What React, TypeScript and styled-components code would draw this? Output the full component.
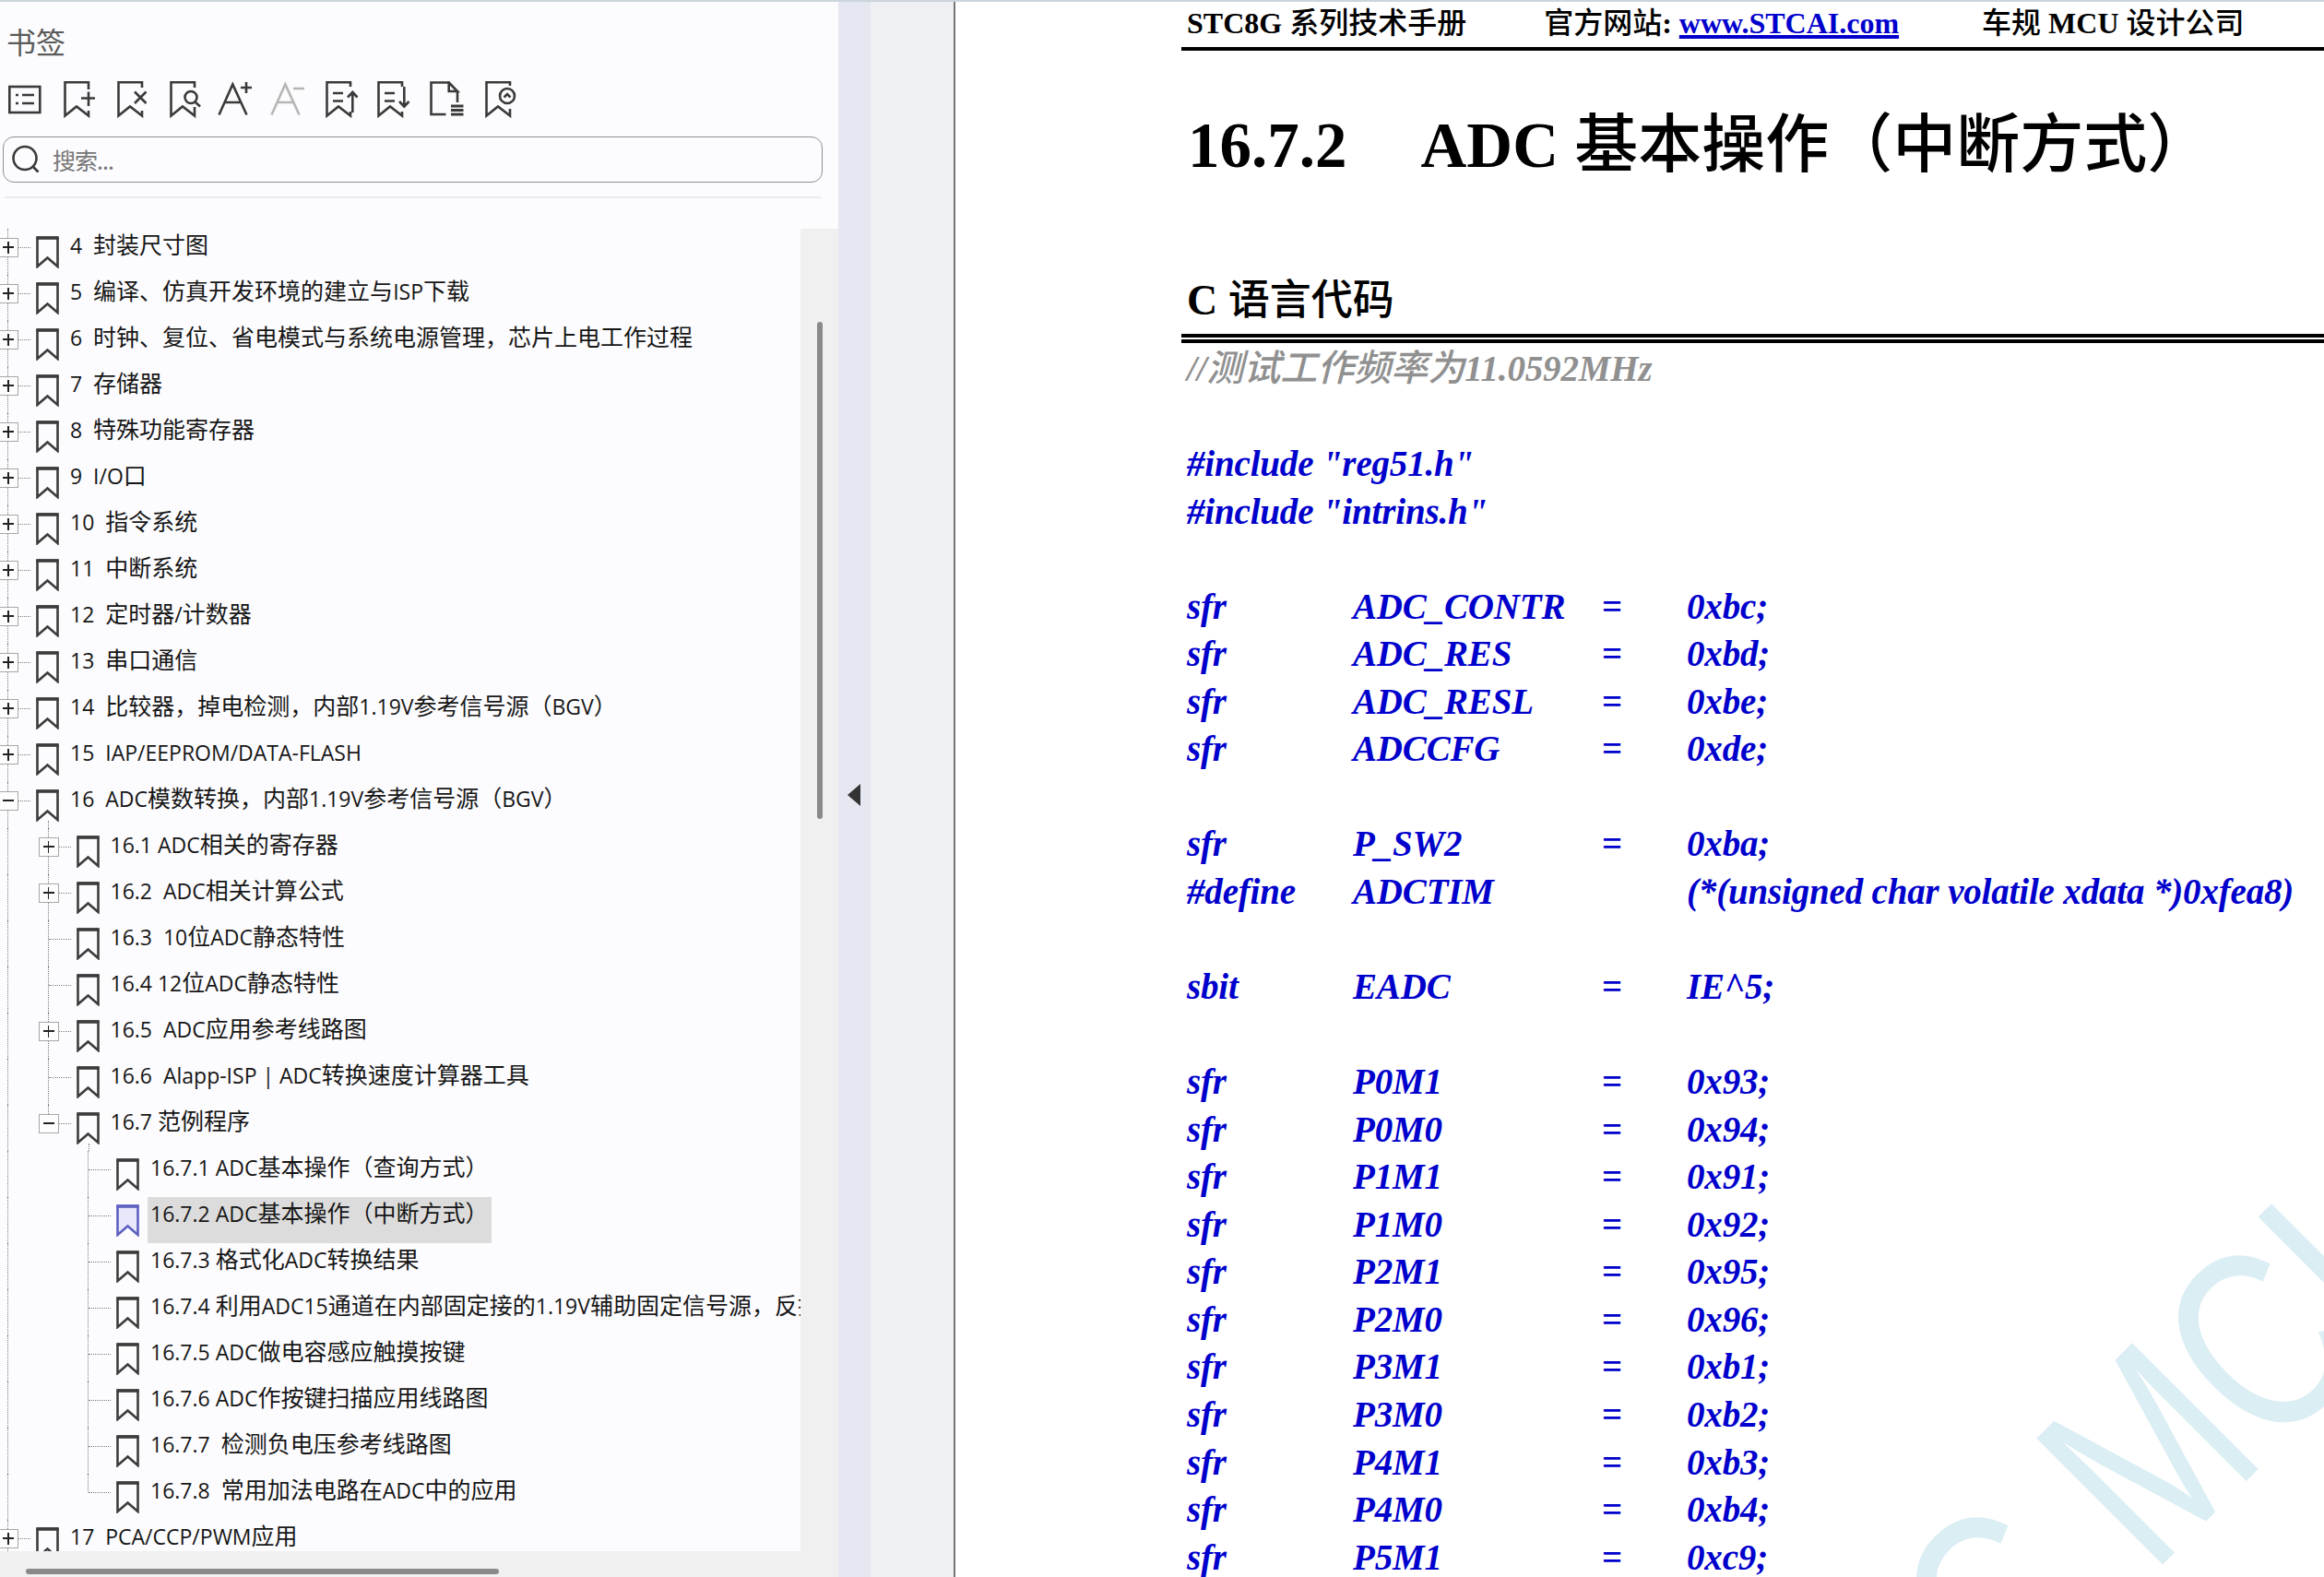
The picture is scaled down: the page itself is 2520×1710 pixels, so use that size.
import React from "react";
import styled, { createGlobalStyle } from "styled-components";

const GlobalStyle = createGlobalStyle`
  html, body {
    margin: 0;
    padding: 0;
    overflow: hidden;
    background: #ffffff;
  }
`;

const Shell = styled.div`
  width: 2520px;
  height: 1710px;
  display: flex;
  flex-direction: column;
  overflow: hidden;
`;

const TopEdge = styled.div`
  height: 2px;
  flex: none;
  background: #ccd4dc;
`;

const Workspace = styled.div`
  flex: 1;
  display: flex;
  min-height: 0;
`;

const Sidebar = styled.aside`
  width: 909px;
  flex: none;
  display: flex;
  flex-direction: column;
  background: #fcfcfe;
`;

const PanelTitle = styled.div`
  height: 86px;
  flex: none;
  padding: 24px 0 0 7px;
  box-sizing: border-box;
  font: 400 32px/36px "Noto Sans CJK SC", sans-serif;
  color: #5a5a5a;
`;

const Toolbar = styled.div`
  display: flex;
  height: 40px;
  flex: none;
  padding-left: 6px;
`;

const ToolIcon = styled.svg<{ $muted?: boolean }>`
  width: 57px;
  height: 40px;
  flex: none;
  fill: none;
  stroke: ${(p) => (p.$muted ? "#b6b6b6" : "#3a3a3a")};
  stroke-width: 2.6;
`;

const SearchBox = styled.div`
  margin: 20px 17px 0 3px;
  height: 50px;
  flex: none;
  box-sizing: border-box;
  border: 1.5px solid #8e8e9a;
  border-radius: 12px;
  display: flex;
  align-items: center;
  padding-left: 8px;
  gap: 13px;
  font: 400 25px/30px "Noto Sans CJK SC", sans-serif;
  color: #777777;
`;

const SearchHint = styled.span`
  letter-spacing: -1px;
`;

const SearchGlyph = styled.svg`
  width: 32px;
  height: 32px;
  flex: none;
  fill: none;
  stroke: #3a3a3a;
  stroke-width: 2.6;
`;

const Divider = styled.div`
  margin: 15px 19px 0 5px;
  height: 1.5px;
  flex: none;
  background: #e9e9ef;
`;

const TreeArea = styled.div`
  margin-top: 33px;
  height: 1434px;
  flex: none;
  display: flex;
`;

const TreeViewport = styled.div`
  width: 868px;
  flex: none;
  overflow: hidden;
`;

const VTrack = styled.div`
  flex: 1;
  background: #f0f0f0;
  padding: 101px 0 0 18px;
`;

const VThumb = styled.div`
  width: 6px;
  height: 539px;
  border-radius: 3px;
  background: #8a8a8a;
`;

const HTrack = styled.div`
  flex: 1;
  background: #f0f0f0;
  padding: 19px 0 0 28px;
`;

const HThumb = styled.div`
  width: 513px;
  height: 6px;
  border-radius: 3px;
  background: #8a8a8a;
`;

const Row = styled.div`
  height: 50px;
  display: flex;
  white-space: pre;
`;

const guideDots = `
  position: absolute;
  width: 0;
  border-left: 1px dotted #7d7d7d;
`;

const Indent = styled.div<{ $guide: boolean }>`
  width: 43.5px;
  flex: none;
  position: relative;
  &::before {
    content: "";
    ${guideDots}
    display: ${(p) => (p.$guide ? "block" : "none")};
    left: 8px;
    top: 0;
    bottom: 0;
  }
`;

const Twist = styled.div<{ $last: boolean }>`
  width: 39px;
  flex: none;
  position: relative;
  &::before {
    content: "";
    ${guideDots}
    left: 8px;
    top: 0;
    height: ${(p) => (p.$last ? "20px" : "50px")};
  }
  &::after {
    content: "";
    position: absolute;
    left: 9px;
    top: 20px;
    width: 24px;
    height: 0;
    border-top: 1px dotted #7d7d7d;
  }
`;

const Expander = styled.div<{ $open: boolean }>`
  position: absolute;
  z-index: 1;
  left: -2px;
  top: 10px;
  width: 22px;
  height: 21px;
  box-sizing: border-box;
  border: 1px solid #a8a8a8;
  background: #fdfdfe;
  &::before {
    content: "";
    position: absolute;
    left: 4px;
    top: 8.5px;
    width: 12px;
    height: 1.5px;
    background: #222222;
  }
  &::after {
    content: "";
    display: ${(p) => (p.$open ? "none" : "block")};
    position: absolute;
    left: 9.3px;
    top: 3px;
    width: 1.5px;
    height: 13px;
    background: #222222;
  }
`;

const MarkCell = styled.div<{ $open: boolean }>`
  width: 25px;
  flex: none;
  margin-right: 12px;
  position: relative;
  &::after {
    content: "";
    ${guideDots}
    display: ${(p) => (p.$open ? "block" : "none")};
    left: 13px;
    top: 42px;
    height: 8px;
  }
`;

const Mark = styled.svg<{ $active: boolean }>`
  display: block;
  margin-top: 8px;
  width: 25px;
  height: 35px;
  fill: ${(p) => (p.$active ? "#e8e8fa" : "none")};
  stroke: ${(p) => (p.$active ? "#5d60c0" : "#3c3c3c")};
  stroke-width: 2.6;
`;

const Label = styled.div<{ $selected: boolean }>`
  height: 50px;
  margin-left: -3px;
  padding: 0 4px 0 3px;
  font: 400 25px/32px "Noto Sans CJK SC", sans-serif;
  color: #161616;
  background: ${(p) => (p.$selected ? "#dcdcdc" : "transparent")};
`;

const Latin = styled.span`
  font-family: "Open Sans", sans-serif;
  font-size: 23px;
  line-height: 0;
`;

const Splitter = styled.div`
  width: 35px;
  flex: none;
  background: #e5e8f0;
  display: flex;
  align-items: center;
  padding: 12px 0 0 10px;
  box-sizing: border-box;
`;

const CollapseArrow = styled.div`
  width: 0;
  height: 0;
  border-style: solid;
  border-width: 12px 14px 12px 0;
  border-color: transparent #333333 transparent transparent;
`;

const Gutter = styled.div`
  width: 90px;
  flex: none;
  background: #eff0f4;
`;

const Page = styled.main`
  flex: 1;
  position: relative;
  overflow: hidden;
  background: #ffffff;
  border-left: 2px solid #777777;
  font-family: "Liberation Serif", "Noto Sans CJK SC", serif;
  white-space: pre;
`;

const Watermark = styled.div`
  position: absolute;
  left: 944px;
  top: 1823px;
  font: 400 281px/1 "Liberation Sans", sans-serif;
  color: #dbeef4;
  transform-origin: 0 238px;
  transform: rotate(-45deg) scaleX(0.78);
`;

const PageBody = styled.div`
  position: relative;
  padding-left: 245px;
`;

const RunningHead = styled.header`
  height: 53px;
  box-sizing: border-box;
  border-bottom: 4px solid #000000;
  display: flex;
  gap: 84px;
  padding: 2px 0 0 6px;
  font-size: 32px;
  font-weight: 700;
  line-height: 42px;
  color: #000000;
`;

const HeadItem = styled.span<{ $shift?: number }>`
  margin-left: ${(p) => p.$shift ?? 0}px;
`;

const Link = styled.a`
  color: #0000cc;
  text-decoration: underline;
  text-decoration-thickness: 4px;
  text-underline-offset: 2px;
`;

const Han = styled.span<{ $weight?: number; $size?: number }>`
  font-family: "Noto Sans CJK SC", sans-serif;
  font-weight: ${(p) => p.$weight ?? 500};
  font-size: ${(p) => (p.$size ? `${p.$size}px` : "inherit")};
  letter-spacing: 0;
  line-height: 0;
`;

const SectionTitle = styled.h1`
  margin: 0;
  height: 198px;
  box-sizing: border-box;
  padding: 53px 0 0 7px;
  font-size: 69px;
  font-weight: 700;
  line-height: 100px;
  color: #000000;
  display: flex;
  align-items: baseline;
  gap: 80px;
`;

const SubTitle = styled.h2`
  margin: 0;
  height: 109px;
  box-sizing: border-box;
  padding: 43px 0 0 6px;
  font-size: 46px;
  font-weight: 700;
  line-height: 60px;
  color: #000000;
`;

const DoubleRule = styled.div`
  height: 10px;
  box-sizing: border-box;
  border-top: 4px solid #000000;
  border-bottom: 4px solid #000000;
`;

const Code = styled.div`
  margin-top: 2px;
  padding-left: 6px;
  font-size: 39px;
  font-weight: 700;
  font-style: italic;
  letter-spacing: -0.17px;
  line-height: 51.55px;
  color: #0000cc;
`;

const CodeLine = styled.div<{ $comment?: boolean }>`
  height: 51.55px;
  color: ${(p) => (p.$comment ? "#909090" : "inherit")};
`;

const DeclLine = styled.div`
  height: 51.55px;
  display: grid;
  grid-template-columns: 180px 270px 92px 1fr;
`;

const Equals = styled.span`
  font-style: normal;
`;

// the same bookmark outline with a gap on the right for the overlay glyph
const openMark = (gapFrom: number, gapTo: number) =>
  `M27 ${gapFrom}V1.3H1.5V37.5L14 27.5L27 37.5V${gapTo}`;

const tools: { dx: number; muted?: boolean; body: React.ReactNode }[] = [
  {
    dx: 3,
    body: (
      <>
        <rect x="1.3" y="6" width="33" height="28" />
        <path d="M8 15h3M15 15h13M8 24h3M15 24h13" />
      </>
    ),
  },
  {
    dx: 6,
    body: (
      <>
        <path d={openMark(9, 32)} />
        <path d="M19 18.5H34M27 11.5V27" />
      </>
    ),
  },
  {
    dx: 7,
    body: (
      <>
        <path d={openMark(7, 32)} />
        <path d="M19 11.5L31.5 24M31.5 11.5L19 24" />
      </>
    ),
  },
  {
    dx: 7,
    body: (
      <>
        <path d={openMark(7, 28)} />
        <circle cx="23" cy="17.5" r="6.5" />
        <path d="M27.5 22.5L33 27.5" />
      </>
    ),
  },
  {
    dx: 2,
    body: (
      <>
        <path d="M1.5 36.5L16.3 3.5L31.5 36.5M8 23H25" />
        <path d="M31 1V13M25 7H37" />
      </>
    ),
  },
  {
    dx: 2,
    muted: true,
    body: (
      <>
        <path d="M1.5 36.5L16.3 3.5L31.5 36.5M8 23H25" />
        <path d="M25 8H37" />
      </>
    ),
  },
  {
    dx: 5,
    body: (
      <>
        <path d={openMark(6, 33)} />
        <path d="M8 13H19M8 21.5H19M29.3 34V12M24 17.5L29.3 12L34.5 17.5" />
      </>
    ),
  },
  {
    dx: 4,
    body: (
      <>
        <path d={openMark(6, 33)} />
        <path d="M8 13H19M8 21.5H19M29.3 6V27.5M24 22L29.3 27.5L34.5 22" />
      </>
    ),
  },
  {
    dx: 4,
    body: (
      <>
        <path d="M20.7 1.5H1.5V36H17.5M20.7 1.5L30 11H20.7ZM30 11V23" />
        <path d="M23 27H36.5M23 31.5H36.5M23 36H36.5" strokeWidth="3" />
      </>
    ),
  },
  {
    dx: 7,
    body: (
      <>
        <path d={openMark(5, 30)} />
        <circle cx="24" cy="16" r="8" />
        <path d="M20.5 17.5L24 14L27.5 17.5" />
      </>
    ),
  },
];

type TreeItem = {
  text: string;
  level: number;
  toggle?: "plus" | "minus";
  last?: boolean;
  selected?: boolean;
};

const treeItems: TreeItem[] = [
  { text: "4  封装尺寸图", level: 0, toggle: "plus" },
  { text: "5  编译、仿真开发环境的建立与ISP下载", level: 0, toggle: "plus" },
  { text: "6  时钟、复位、省电模式与系统电源管理，芯片上电工作过程", level: 0, toggle: "plus" },
  { text: "7  存储器", level: 0, toggle: "plus" },
  { text: "8  特殊功能寄存器", level: 0, toggle: "plus" },
  { text: "9  I/O口", level: 0, toggle: "plus" },
  { text: "10  指令系统", level: 0, toggle: "plus" },
  { text: "11  中断系统", level: 0, toggle: "plus" },
  { text: "12  定时器/计数器", level: 0, toggle: "plus" },
  { text: "13  串口通信", level: 0, toggle: "plus" },
  { text: "14  比较器，掉电检测，内部1.19V参考信号源（BGV）", level: 0, toggle: "plus" },
  { text: "15  IAP/EEPROM/DATA-FLASH", level: 0, toggle: "plus" },
  { text: "16  ADC模数转换，内部1.19V参考信号源（BGV）", level: 0, toggle: "minus" },
  { text: "16.1 ADC相关的寄存器", level: 1, toggle: "plus" },
  { text: "16.2  ADC相关计算公式", level: 1, toggle: "plus" },
  { text: "16.3  10位ADC静态特性", level: 1 },
  { text: "16.4 12位ADC静态特性", level: 1 },
  { text: "16.5  ADC应用参考线路图", level: 1, toggle: "plus" },
  { text: "16.6  Alapp-ISP | ADC转换速度计算器工具", level: 1 },
  { text: "16.7 范例程序", level: 1, toggle: "minus", last: true },
  { text: "16.7.1 ADC基本操作（查询方式）", level: 2 },
  { text: "16.7.2 ADC基本操作（中断方式）", level: 2, selected: true },
  { text: "16.7.3 格式化ADC转换结果", level: 2 },
  { text: "16.7.4 利用ADC15通道在内部固定接的1.19V辅助固定信号源，反推工作电压", level: 2 },
  { text: "16.7.5 ADC做电容感应触摸按键", level: 2 },
  { text: "16.7.6 ADC作按键扫描应用线路图", level: 2 },
  { text: "16.7.7  检测负电压参考线路图", level: 2 },
  { text: "16.7.8  常用加法电路在ADC中的应用", level: 2, last: true },
  { text: "17  PCA/CCP/PWM应用", level: 0, toggle: "plus" },
];

const asciiRun = /([\u0000-\u007f]+)/;

function TreeLabel({ text }: { text: string }) {
  return (
    <>
      {text.split(asciiRun).map((part, i) =>
        asciiRun.test(part) ? <Latin key={i}>{part}</Latin> : part
      )}
    </>
  );
}

function PageText({ text, weight, size }: { text: string; weight?: number; size?: number }) {
  return (
    <>
      {text.split(asciiRun).map((part, i) =>
        asciiRun.test(part) ? part : (
          <Han key={i} $weight={weight} $size={size}>
            {part}
          </Han>
        )
      )}
    </>
  );
}

function TreeRow({ item }: { item: TreeItem }) {
  // level 1 rows sit under the open chapter 16; 16.7 is its last child, so
  // its children no longer carry the level 1 guide
  const guides = item.level === 2 ? [true, false] : item.level === 1 ? [true] : [];
  return (
    <Row>
      {guides.map((on, i) => (
        <Indent key={i} $guide={on} />
      ))}
      <Twist $last={!!item.last}>
        {item.toggle && <Expander $open={item.toggle === "minus"} />}
      </Twist>
      <MarkCell $open={item.toggle === "minus"}>
        <Mark viewBox="0 0 25 35" $active={!!item.selected}>
          <path d="M1.5 1.8H23.5V33L12.5 23.5L1.5 33Z" />
          <path d="M0.5 2H24.5" strokeWidth="3.6" />
        </Mark>
      </MarkCell>
      <Label $selected={!!item.selected}>
        <TreeLabel text={item.text} />
      </Label>
    </Row>
  );
}

type Decl = { kw: string; name: string; value: string; noEq?: boolean };

const codeLines: (string | Decl | null)[] = [
  null,
  '#include "reg51.h"',
  '#include "intrins.h"',
  null,
  { kw: "sfr", name: "ADC_CONTR", value: "0xbc;" },
  { kw: "sfr", name: "ADC_RES", value: "0xbd;" },
  { kw: "sfr", name: "ADC_RESL", value: "0xbe;" },
  { kw: "sfr", name: "ADCCFG", value: "0xde;" },
  null,
  { kw: "sfr", name: "P_SW2", value: "0xba;" },
  { kw: "#define", name: "ADCTIM", value: "(*(unsigned char volatile xdata *)0xfea8)", noEq: true },
  null,
  { kw: "sbit", name: "EADC", value: "IE^5;" },
  null,
  { kw: "sfr", name: "P0M1", value: "0x93;" },
  { kw: "sfr", name: "P0M0", value: "0x94;" },
  { kw: "sfr", name: "P1M1", value: "0x91;" },
  { kw: "sfr", name: "P1M0", value: "0x92;" },
  { kw: "sfr", name: "P2M1", value: "0x95;" },
  { kw: "sfr", name: "P2M0", value: "0x96;" },
  { kw: "sfr", name: "P3M1", value: "0xb1;" },
  { kw: "sfr", name: "P3M0", value: "0xb2;" },
  { kw: "sfr", name: "P4M1", value: "0xb3;" },
  { kw: "sfr", name: "P4M0", value: "0xb4;" },
  { kw: "sfr", name: "P5M1", value: "0xc9;" },
];

export default function App() {
  return (
    <Shell>
      <GlobalStyle />
      <TopEdge />
      <Workspace>
        <Sidebar>
          <PanelTitle>书签</PanelTitle>
          <Toolbar>
            {tools.map((t, i) => (
              <ToolIcon key={i} viewBox={`${-t.dx} 0 57 40`} $muted={t.muted}>
                {t.body}
              </ToolIcon>
            ))}
          </Toolbar>
          <SearchBox>
            <SearchGlyph viewBox="0 0 32 32">
              <circle cx="15" cy="14.5" r="12.5" />
              <path d="M24 24L29.5 29.5" />
            </SearchGlyph>
            <SearchHint>搜索...</SearchHint>
          </SearchBox>
          <Divider />
          <TreeArea>
            <TreeViewport>
              {treeItems.map((item) => (
                <TreeRow key={item.text} item={item} />
              ))}
            </TreeViewport>
            <VTrack>
              <VThumb />
            </VTrack>
          </TreeArea>
          <HTrack>
            <HThumb />
          </HTrack>
        </Sidebar>
        <Splitter>
          <CollapseArrow />
        </Splitter>
        <Gutter />
        <Page>
          <Watermark>STC MCU</Watermark>
          <PageBody>
            <RunningHead>
              <HeadItem>
                <PageText text="STC8G 系列技术手册" />
              </HeadItem>
              <HeadItem>
                <PageText text="官方网站: " />
                <Link href="#">www.STCAI.com</Link>
              </HeadItem>
              <HeadItem $shift={6}>
                <PageText text="车规 MCU 设计公司" />
              </HeadItem>
            </RunningHead>
            <SectionTitle>
              <span>16.7.2</span>
              <span>
                <PageText text="ADC 基本操作（中断方式）" weight={500} size={69} />
              </span>
            </SectionTitle>
            <SubTitle>
              <PageText text="C 语言代码" size={45} />
            </SubTitle>
            <DoubleRule />
            <Code>
              <CodeLine $comment>
                <PageText text="//测试工作频率为11.0592MHz" weight={500} size={40} />
              </CodeLine>
              {codeLines.map((line, i) => {
                if (line === null) return <CodeLine key={i} />;
                if (typeof line === "string") return <CodeLine key={i}>{line}</CodeLine>;
                return (
                  <DeclLine key={i}>
                    <span>{line.kw}</span>
                    <span>{line.name}</span>
                    <Equals>{line.noEq ? "" : "="}</Equals>
                    <span>{line.value}</span>
                  </DeclLine>
                );
              })}
            </Code>
          </PageBody>
        </Page>
      </Workspace>
    </Shell>
  );
}
